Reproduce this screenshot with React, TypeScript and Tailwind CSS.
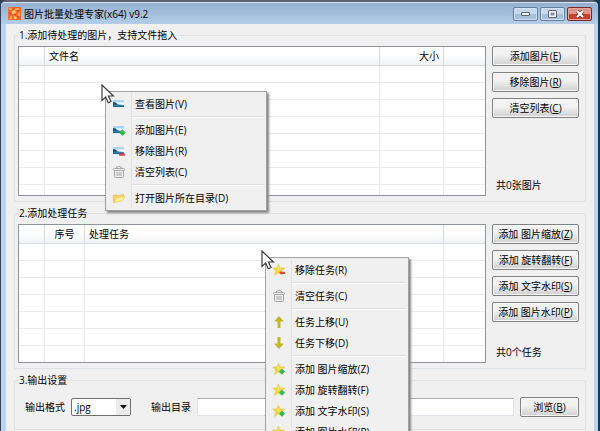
import React from 'react';
import clsx from 'clsx';

interface Column {
  label: string;
  width: string;
  align?: string;
}

interface MenuEntry {
  label: string;
  icon: React.ReactNode;
}

function AppIcon() {
  return (
    <svg width="13" height="13" viewBox="0 0 13 13">
      <rect width="13" height="13" rx="1" fill="#ee6c2c" />
      <path d="M1 1h3v2H1zM7 1h4v2H7zM10 6h2v3h-2zM2 9h2v3H2z" fill="#f9a54a" />
      <path d="M4 4l3-1 1 3-2 1-2 0zM6 9l3 1-1 2-2 0z" fill="#fbc96e" />
      <path d="M1.500 5l2 3M9 4l2-1M5 1l1 1.500M9 9l2 2M6 7l2 1" stroke="#d8452a" strokeWidth="1.200" />
    </svg>
  );
}

function PictureIcon({ badge }: { badge?: 'add' | 'remove' }) {
  return (
    <svg width="14" height="14" viewBox="0 0 14 14">
      <rect x="1" y="3" width="11" height="8" fill="#d4eafa" />
      <rect x="1" y="3" width="11" height="2" fill="#a9d4f2" />
      <path d="M1 5q3 0 4.500 2l6.500 1.500V10H1z" fill="#3f8fc4" />
      <path d="M1 5q2.500 0 4.500 2.500L1 8z" fill="#1c4a80" />
      <path d="M1 8.500h11V10H1z" fill="#246a7c" />
      <path d="M6 6h6v1.200H7z" fill="#f6fcff" />
      {badge === 'add' && <path d="M10.500 7l2.700 2.700-2.700 2.700-2.700-2.700z" fill="#37b950" stroke="#37b950" strokeLinejoin="round" />}
      {badge === 'remove' && <rect x="7" y="9.500" width="6" height="2.200" rx=".6" fill="#dc3b50" />}
    </svg>
  );
}

function TrashIcon() {
  return (
    <svg width="14" height="14" viewBox="0 0 14 14" fill="none" stroke="#a6a6a6" strokeWidth="1">
      <path d="M4 3.500Q4 1.500 7 1.500t3 2" />
      <rect x="1.500" y="3.500" width="11" height="2" rx="1" fill="#f4f4f4" />
      <path d="M2.500 5.500v6q0 1 1 1h7q1 0 1-1v-6" />
      <path d="M5 7v4M7 7v4M9 7v4" />
    </svg>
  );
}

function FolderIcon() {
  return (
    <svg width="14" height="14" viewBox="0 0 14 14">
      <path d="M1 4.500l4-.8 1 1L11.500 3v3L3 11.500H1.500z" fill="#f3d568" stroke="#dcb848" strokeWidth=".5" />
      <path d="M2 11.500L4.500 7l8.500-2-2.500 5z" fill="#fdf09a" stroke="#e6c95c" strokeWidth=".6" />
    </svg>
  );
}

function StarIcon({ badge }: { badge: 'add' | 'remove' }) {
  return (
    <svg width="14" height="14" viewBox="0 0 14 14">
      <path d="M6.500 1l1.600 3.800L13 5 9.300 8l1.200 4.500-4-2.600-4.200 2.600 1.500-4.600L.5 5l4.500-.2z" fill="#edd23a" stroke="#e0cd6a" strokeWidth=".5" />
      <path d="M6.500 2.500l1 3.200 2 .3-3 2-2.500-2 1.500-.3z" fill="#f5e36c" />
      {badge === 'add' && <path d="M10 7.200l2.500 2.500-2.500 2.500-2.500-2.500z" fill="#37b950" stroke="#37b950" strokeLinejoin="round" />}
      {badge === 'remove' && <path d="M7 9.500l2.500-1.500v.8h3.500v2.200H9.500v.6z" fill="#d9482e" />}
    </svg>
  );
}

function ArrowIcon({ down }: { down?: boolean }) {
  return (
    <svg width="14" height="14" viewBox="0 0 14 14" fill="#c4b52c" className={clsx(down && 'rotate-180')}>
      <path d="M7 1l5 5.500H8.500V13h-3V6.500H2z" />
    </svg>
  );
}

function Cursor() {
  return (
    <svg width="14" height="20" viewBox="0 0 14 20">
      <path d="M1 1v15.500l3.700-3.400 2.600 5.600 2.700-1.200-2.600-5.500h5z" fill="#fff" stroke="#3c3c3c" strokeWidth="1.200" />
    </svg>
  );
}

function PushButton({ label, hotkey }: { label: string; hotkey: string }) {
  return (
    <button className="h-5 w-full rounded-[2px] border border-[#808080] bg-linear-to-b from-[#f2f2f2] from-40% to-[#d0d0d0] text-center leading-4 whitespace-nowrap shadow-[inset_0_0_0_1px_#f8f8f8]">
      {label}(<u>{hotkey}</u>)
    </button>
  );
}

function ListTable({ columns, rows, name }: { columns: Column[]; rows: number; name: string }) {
  return (
    <table aria-label={name} className="w-full table-fixed border-separate border-spacing-0">
      <thead>
        <tr>
          {columns.map((col, i) => (
            <th
              key={i}
              className={clsx(
                'h-[19px] border-b border-[#d8dade] bg-linear-to-b from-white from-40% to-[#f1f2f4] px-1 py-0 font-normal leading-4',
                col.width,
                col.align || 'text-left',
                i < columns.length - 1 && 'border-r'
              )}
            >
              {col.label}
            </th>
          ))}
        </tr>
      </thead>
      <tbody>
        {Array.from({ length: rows }, (_, r) => (
          <tr key={r}>
            {columns.map((_col, i) => (
              <td
                key={i}
                className={clsx('h-[17px] border-b border-[#ebebeb] p-0', i < columns.length - 1 && 'border-r')}
              />
            ))}
          </tr>
        ))}
      </tbody>
    </table>
  );
}

function ContextMenu({ groups, className }: { groups: MenuEntry[][]; className: string }) {
  return (
    <div
      role="menu"
      className={clsx('absolute border border-[#a0a0a0] bg-[#f0f0f0] pt-px pb-0.5 shadow-[2px_2px_2px_#888]', className)}
    >
      {groups.map((group, g) => (
        <React.Fragment key={g}>
          {g > 0 && (
            <div role="separator" className="flex h-[5px] items-center">
              <span className="h-full w-[26px] border-r border-[#e2e2e2]" />
              <span className="mr-0.5 ml-px h-0.5 flex-1 border-t border-b border-t-[#dedede] border-b-white" />
            </div>
          )}
          {group.map(item => (
            <button key={item.label} role="menuitem" className="flex h-[21px] w-full items-center text-left whitespace-nowrap">
              <span className="flex h-full w-[26px] items-center justify-center border-r border-[#e2e2e2]">{item.icon}</span>
              <span className="pl-[3px]">{item.label}</span>
            </button>
          ))}
        </React.Fragment>
      ))}
    </div>
  );
}

const fileColumns: Column[] = [
  { label: '', width: 'w-[26px]' },
  { label: '文件名', width: 'w-auto' },
  { label: '大小', width: 'w-16', align: 'text-right' },
  { label: '', width: 'w-[41px]' },
];

const taskColumns: Column[] = [
  { label: '', width: 'w-[26px]' },
  { label: '序号', width: 'w-10', align: 'text-center' },
  { label: '处理任务', width: 'w-auto' },
  { label: '', width: 'w-[41px]' },
];

const fileButtons = [
  { label: '添加图片', hotkey: 'E' },
  { label: '移除图片', hotkey: 'R' },
  { label: '清空列表', hotkey: 'C' },
];

const taskButtons = [
  { label: '添加 图片缩放', hotkey: 'Z' },
  { label: '添加 旋转翻转', hotkey: 'F' },
  { label: '添加 文字水印', hotkey: 'S' },
  { label: '添加 图片水印', hotkey: 'P' },
];

const fileMenu: MenuEntry[][] = [
  [{ label: '查看图片(V)', icon: <PictureIcon /> }],
  [
    { label: '添加图片(E)', icon: <PictureIcon badge="add" /> },
    { label: '移除图片(R)', icon: <PictureIcon badge="remove" /> },
    { label: '清空列表(C)', icon: <TrashIcon /> },
  ],
  [{ label: '打开图片所在目录(D)', icon: <FolderIcon /> }],
];

const taskMenu: MenuEntry[][] = [
  [{ label: '移除任务(R)', icon: <StarIcon badge="remove" /> }],
  [{ label: '清空任务(C)', icon: <TrashIcon /> }],
  [
    { label: '任务上移(U)', icon: <ArrowIcon /> },
    { label: '任务下移(D)', icon: <ArrowIcon down /> },
  ],
  [
    { label: '添加 图片缩放(Z)', icon: <StarIcon badge="add" /> },
    { label: '添加 旋转翻转(F)', icon: <StarIcon badge="add" /> },
    { label: '添加 文字水印(S)', icon: <StarIcon badge="add" /> },
    { label: '添加 图片水印(P)', icon: <StarIcon badge="add" /> },
  ],
];

export default function App() {
  return (
    <div className="relative h-screen overflow-hidden bg-linear-to-r from-[#35405a] to-[#0d3d57] pr-0.5 pl-px font-['Open_Sans','Noto_Sans_CJK_SC',sans-serif] text-[10px] leading-[14px] text-black">
      <div className="flex min-h-full flex-col rounded-t-md border-t-2 border-[#5d6470] bg-[#bdd3ee]">
        {/* Title bar */}
        <header className="flex h-[22px] items-center gap-[3px] rounded-t-sm border-t border-[#d5e2f1] bg-linear-to-b from-[#96b0d0] to-[#b4cde8] pr-1.5 pl-[7px]">
          <AppIcon />
          <h1 className="flex-1">图片批量处理专家(x64) v9.2</h1>
          <div className="flex gap-0.5">
            <button aria-label="最小化" className="flex h-[14px] w-[25px] items-center justify-center rounded-[2px] border border-[#65809f] bg-linear-to-b from-[#c5d8ec] from-50% to-[#a5bfdc] to-50% shadow-[inset_0_0_0_1px_#d3e1f0]">
              <svg width="9" height="4" viewBox="0 0 9 4">
                <rect x=".5" y=".5" width="8" height="3" rx=".5" fill="#fff" stroke="#5a6674" />
              </svg>
            </button>
            <button aria-label="最大化" className="flex h-[14px] w-[25px] items-center justify-center rounded-[2px] border border-[#65809f] bg-linear-to-b from-[#c5d8ec] from-50% to-[#a5bfdc] to-50% shadow-[inset_0_0_0_1px_#d3e1f0]">
              <svg width="9" height="8" viewBox="0 0 9 8">
                <rect x=".5" y=".5" width="8" height="7" rx=".5" fill="#fff" stroke="#5a6674" />
                <rect x="3" y="3" width="3" height="2" fill="#9ab4d2" stroke="#5a6674" strokeWidth=".7" />
              </svg>
            </button>
            <button aria-label="关闭" className="flex h-[14px] w-[25px] items-center justify-center rounded-[2px] border border-[#7a2a2a] bg-linear-to-b from-[#dd9587] from-50% to-[#c4412f] to-50% shadow-[inset_0_0_0_1px_#e0a498]">
              <svg width="10" height="8" viewBox="0 0 10 8">
                <path d="M2 1l6 6M8 1L2 7" stroke="#5c3434" strokeWidth="3.400" />
                <path d="M2 1l6 6M8 1L2 7" stroke="#fff" strokeWidth="2" />
              </svg>
            </button>
          </div>
        </header>

        {/* Client area */}
        <main className="mr-1 ml-[5px] flex flex-1 flex-col gap-1 bg-[#f0f0f0] px-2 pt-1">
          <fieldset className="rounded-[2px] border border-[#dce1e5] pr-1.5 pb-[5px] pl-[3px]">
            <legend className="px-px">1.添加待处理的图片，支持文件拖入</legend>
            <div className="flex gap-1.5 pt-1">
              <div className="h-[150px] flex-1 overflow-hidden border border-[#8f949a] bg-white">
                <ListTable columns={fileColumns} rows={8} name="图片" />
              </div>
              <div className="flex w-[87px] flex-col gap-1.5 pb-1">
                {fileButtons.map(b => (
                  <PushButton key={b.hotkey} label={b.label} hotkey={b.hotkey} />
                ))}
                <p className="mt-auto pl-1">共0张图片</p>
              </div>
            </div>
          </fieldset>

          <fieldset className="rounded-[2px] border border-[#dce1e5] pr-1.5 pb-[5px] pl-[3px]">
            <legend className="px-px">2.添加处理任务</legend>
            <div className="flex gap-1.5 pt-1">
              <div className="h-[139px] flex-1 overflow-hidden border border-[#8f949a] bg-white">
                <ListTable columns={taskColumns} rows={7} name="任务" />
              </div>
              <div className="flex w-[87px] flex-col gap-1.5 pb-1">
                {taskButtons.map(b => (
                  <PushButton key={b.hotkey} label={b.label} hotkey={b.hotkey} />
                ))}
                <p className="mt-auto pl-1">共0个任务</p>
              </div>
            </div>
          </fieldset>

          <fieldset className="rounded-[2px] border border-[#dce1e5] pr-1.5 pb-3 pl-[3px]">
            <legend className="px-px">3.输出设置</legend>
            <div className="flex items-center gap-1.5 pt-2.5 pl-[7px]">
              <label htmlFor="format">输出格式</label>
              <div className="relative h-[18px] w-[60px]">
                <select
                  id="format"
                  defaultValue=".jpg"
                  className="block h-full w-full appearance-none rounded-[2px] border border-[#707070] bg-white pl-0.5 leading-4"
                >
                  <option>.jpg</option>
                  <option>.png</option>
                  <option>.bmp</option>
                </select>
                <span className="pointer-events-none absolute inset-y-px right-px flex w-[14px] items-center justify-center bg-[#ececec]">
                  <svg width="7" height="4" viewBox="0 0 7 4">
                    <path d="M0 0h7L3.500 4z" fill="#111" />
                  </svg>
                </span>
              </div>
              <label htmlFor="folder" className="pl-[14px]">输出目录</label>
              <input
                id="folder"
                type="text"
                className="h-[18px] min-w-0 flex-1 border border-[#e0e3e8] border-t-[#abadb3] bg-white px-1"
              />
              <div className="w-[59px]">
                <PushButton label="浏览" hotkey="B" />
              </div>
            </div>
          </fieldset>
        </main>
      </div>

      {/* Context menus and pointers */}
      <ContextMenu groups={fileMenu} className="top-[91px] left-[105px] w-[162px]" />
      <ContextMenu groups={taskMenu} className="top-[257px] left-[265px] w-[144px]" />
      <div className="absolute top-[84px] left-[101px]">
        <Cursor />
      </div>
      <div className="absolute top-[250px] left-[261px]">
        <Cursor />
      </div>
    </div>
  );
}
